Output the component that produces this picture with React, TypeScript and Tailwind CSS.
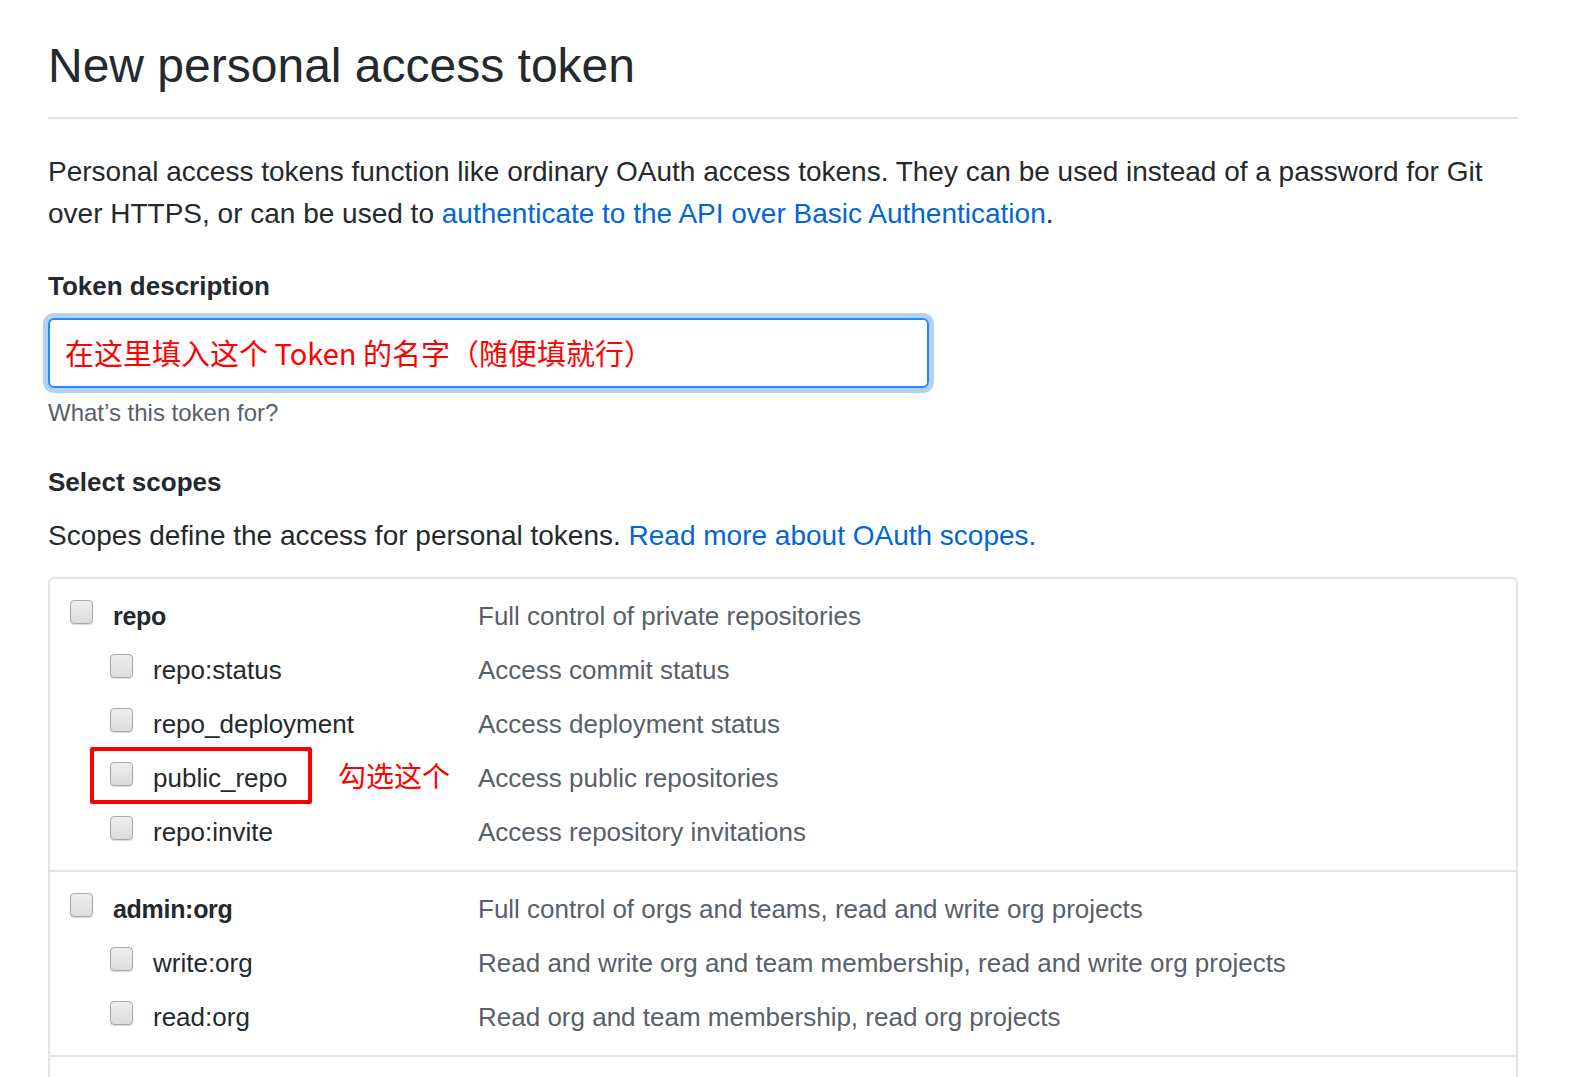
import React from "react";

const font = { fontFamily: '"Liberation Sans", Arial, sans-serif' };

function Box() {
  return (
    <span className="inline-block w-[23px] h-[24px] rounded-[4px] border border-[#a9a9a9] bg-gradient-to-b from-[#eeeeee] to-[#dcdcdc] shadow-[0_1px_1px_rgba(0,0,0,0.15)] shrink-0" />
  );
}

type Row = { name: string; desc: string; sub?: boolean };

function ScopeRow({ name, desc, sub }: Row) {
  return (
    <div className="flex h-[54px] items-center">
      <div className={`flex items-center w-[428px] ${sub ? "pl-[60px]" : "pl-[20px]"}`}>
        <div className="mt-[-1px]">
          <Box />
        </div>
        <span
          className={`ml-[20px] leading-[54px] text-[#24292e] ${
            sub ? "text-[26px]" : "text-[25px] font-bold tracking-[-0.3px]"
          }`}
        >
          {name}
        </span>
      </div>
      <span className="text-[26px] leading-[54px] text-[#586069]">{desc}</span>
    </div>
  );
}

function Group({ rows, last }: { rows: Row[]; last?: boolean }) {
  return (
    <div className={`pt-[10px] pb-[11px] ${last ? "" : "border-b-2 border-[#e1e4e8]"}`}>
      {rows.map((r) => (
        <ScopeRow key={r.name} {...r} />
      ))}
    </div>
  );
}

export default function App() {
  return (
    <div className="w-[1576px] h-[1077px] overflow-hidden bg-white text-[#24292e]" style={font}>
      <div className="ml-[48px] w-[1470px]">
        <h1 className="text-[48px] leading-[60px] font-normal pt-[36px] pb-[21px] border-b-2 border-[#e1e4e8]">
          New personal access token
        </h1>
        <p className="mt-[32px] text-[28px] leading-[42px]">
          Personal access tokens function like ordinary OAuth access tokens. They can be used instead of a password for Git over HTTPS, or can be used to{" "}
          <span className="text-[#0366d6]">authenticate to the API over Basic Authentication</span>.
        </p>
        <div className="mt-[30px] text-[26px] leading-[42px] font-bold">Token description</div>
        <div
          className="mt-[11px] w-[881px] h-[70px] border-2 border-[#2188ff] rounded-[6px] shadow-[0_0_0_5px_rgba(3,102,214,0.3)] flex items-center pl-[15px] text-[#ff0000] text-[29px]"
          style={{ fontFamily: '"Noto Sans CJK SC", "Noto Sans", sans-serif' }}
        >
          在这里填入这个 Token 的名字（随便填就行）
        </div>
        <p className="mt-[7px] text-[24px] leading-[36px] text-[#586069]">What’s this token for?</p>
        <div className="mt-[30px] text-[26px] leading-[42px] font-bold">Select scopes</div>
        <p className="mt-[12px] text-[28px] leading-[42px]">
          Scopes define the access for personal tokens.{" "}
          <span className="text-[#0366d6]">Read more about OAuth scopes.</span>
        </p>
        <div className="relative mt-[20px] border-2 border-[#e1e4e8] rounded-[6px]">
          <Group
            rows={[
              { name: "repo", desc: "Full control of private repositories" },
              { name: "repo:status", desc: "Access commit status", sub: true },
              { name: "repo_deployment", desc: "Access deployment status", sub: true },
              { name: "public_repo", desc: "Access public repositories", sub: true },
              { name: "repo:invite", desc: "Access repository invitations", sub: true },
            ]}
          />
          <Group
            rows={[
              { name: "admin:org", desc: "Full control of orgs and teams, read and write org projects" },
              { name: "write:org", desc: "Read and write org and team membership, read and write org projects", sub: true },
              { name: "read:org", desc: "Read org and team membership, read org projects", sub: true },
            ]}
          />
          <Group
            last
            rows={[
              { name: "admin:public_key", desc: "Full control of user public keys" },
              { name: "write:public_key", desc: "Write user public keys", sub: true },
            ]}
          />
          <div className="absolute left-[40px] top-[168px] w-[222px] h-[57px] border-[4px] border-[#ff0000] rounded-[2px]" />
          <div
            className="absolute left-[288px] top-[176px] text-[28px] leading-[40px] text-[#ff0000]"
            style={{ fontFamily: '"Noto Sans CJK SC", sans-serif' }}
          >
            勾选这个
          </div>
        </div>
      </div>
    </div>
  );
}
